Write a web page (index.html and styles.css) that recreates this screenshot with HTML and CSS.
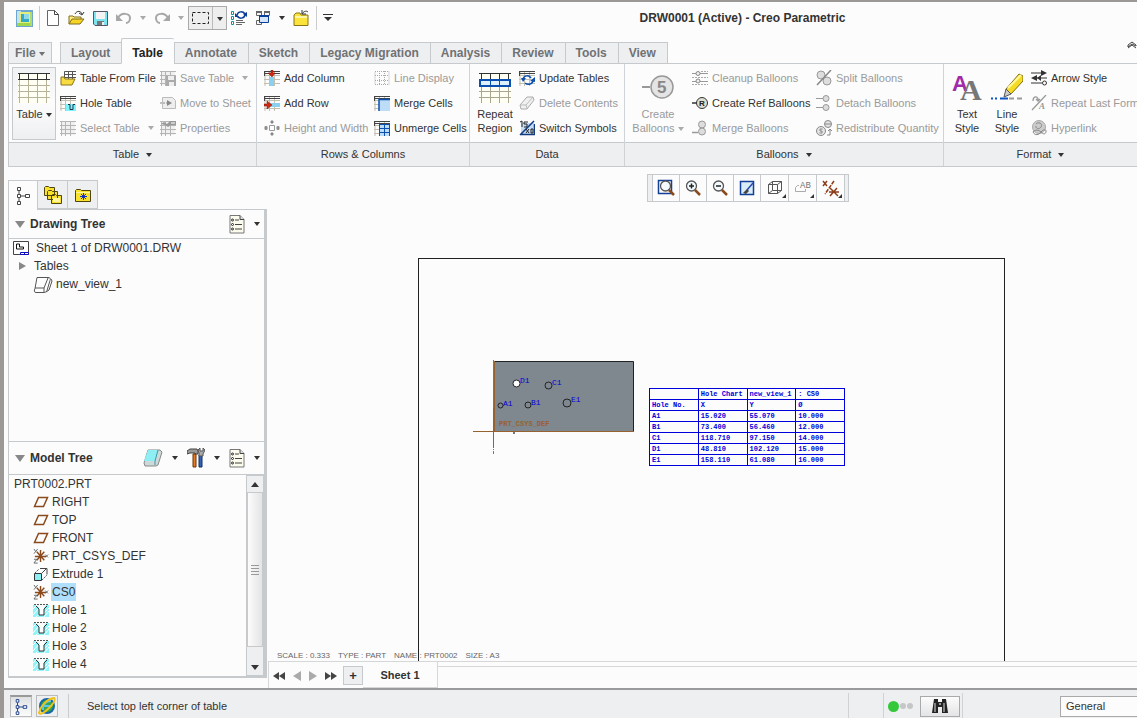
FILE: index.html
```
<!DOCTYPE html>
<html lang="en">
<head>
    <meta charset="utf-8">
    <title>DRW0001 (Active) - Creo Parametric</title>
    <link rel="stylesheet" href="styles.css">
</head>
<body>
<svg class="sprite" width="0" height="0" aria-hidden="true">
    <symbol id="grid" viewBox="0 0 16 16"><path d="M1 1v15M5.500 1v15M10.500 1v15M0 5.500h16M0 9.500h16M0 13.500h16" stroke="#c2bfae" fill="none"/><path d="M0 1.500h16M0 3.500h16M.5 1v5" stroke="#444" fill="none"/></symbol>
    <symbol id="grid-grey" viewBox="0 0 16 16"><path d="M1 1h14v14H1z" fill="#f0f0f0"/><path d="M1.500 1v15M5.500 1v15M10.500 1v15M0 5.500h16M0 9.500h16M0 13.500h16M0 1.500h16" stroke="#b5b5b5" fill="none"/></symbol>
    <symbol id="csys" viewBox="0 0 17 17"><path d="M2 9h12M8 2v13M4 4l8 9M12 4l-8 9" stroke="#8b4a1c" stroke-width="1.500" fill="none"/><path d="M1 1l2 3M5 1L1 6M13 7l3 3M16 7l-3 3M1 12h3l-3 4h4" stroke="#666" fill="none"/></symbol>
    <symbol id="plane" viewBox="0 0 16 16"><path d="M5.500 3.500h9l-4 9h-9z" stroke="#8b4a1c" stroke-width="1.500" fill="none"/></symbol>
    <symbol id="hole" viewBox="0 0 16 14"><path d="M0 2h4l2 3v7h5V5l2-3h3v12H0z" fill="#8ff5fa"/><path d="M0 6l4-4M0 12l5-6M3 14l4-4M11 10l5-5M11 14l5-6" stroke="#fff"/><path d="M1 1.500h14" stroke="#555" stroke-dasharray="2 1"/><path d="M3 3l3 3v6h5V6l3-3" stroke="#333" fill="none"/></symbol>
    <symbol id="list" viewBox="0 0 16 20"><path d="M1 1.500h10l4 4V19H1z" fill="#fbfbee" stroke="#777"/><path d="M11 1.500v4h4" fill="#ddd" stroke="#444"/><path d="M6 6h4M6 10.500h7M6 15h7" stroke="#444"/><g fill="#fff" stroke="#222"><circle cx="3.500" cy="6" r="1"/><circle cx="3.500" cy="10.500" r="1"/><circle cx="3.500" cy="15" r="1"/></g></symbol>
    <symbol id="nodes" viewBox="0 0 16 20"><path d="M4 5v10M4 10h7" stroke="currentColor"/><g fill="#fff" stroke="currentColor"><path d="M2.500 1.500h3v3h-3zM2.500 8.500h3v3h-3zM2.500 15.500h3v3h-3zM10.500 8.500h4v3h-4z"/></g></symbol>
    <symbol id="glass" viewBox="0 0 18 18"><circle cx="7.500" cy="7" r="5" fill="#f4fbff" stroke="#555" stroke-width="1.300"/><path d="M11 11l5 5" stroke="#8b4a1c" stroke-width="2.500"/></symbol>
</svg>

<div class="app">
    <header class="title-bar">
        <div class="quick-access">
            <svg width="17" height="17" viewBox="0 0 17 17"><path d="M0 0h17v17H0z" fill="#6fa6cf"/><path d="M1 1h4v15H1z" fill="#c3e4f2"/><path d="M1 13h15v3H1z" fill="#9fd64b"/><path d="M14 2h2v14h-2z" fill="#b5dd62"/><path d="M4 2h10v11H4z" fill="#e3ee7a"/><path d="M5 4h8v8H5z" fill="#38a7c4"/><path d="M8 4h5v5H8z" fill="#8fd8ea"/></svg>
            <span class="divider"></span>
            <button class="tool" aria-label="New"><svg width="14" height="16" viewBox="0 0 14 16"><path d="M1.500.5h7l4 4v11h-11z" fill="#fff" stroke="#666"/><path d="M8.500.5v4h4" fill="none" stroke="#444"/></svg></button>
            <button class="tool" aria-label="Open"><svg width="17" height="16" viewBox="0 0 17 16"><path d="M1 14V6h4l1 1h7v3" fill="#ffef80" stroke="#806c20"/><path d="M1 14l3-5h12l-4 5z" fill="#f7d426" stroke="#806c20"/><path d="M7 4c2-4 6-3 7 0m-3-1l3 2 2-3" fill="none" stroke="#333"/></svg></button>
            <button class="tool" aria-label="Save"><svg width="15" height="15" viewBox="0 0 15 15"><path d="M.5.5h14v14H2l-1.500-1.500z" fill="#7be6f0" stroke="#556"/><path d="M3 1h9v7H3z" fill="#f4f4f4"/><path d="M4 10h7v4H4z" fill="#777"/><path d="M9 11h2v3H9z" fill="#eee"/></svg></button>
            <button class="tool" aria-label="Undo"><svg width="16" height="14" viewBox="0 0 16 14"><path d="M2 7c3-6 12-5 12 0 0 3-2 5-4 5" fill="none" stroke="#a7a7a7" stroke-width="2"/><path d="M0 3v7h7z" fill="#a7a7a7"/></svg></button>
            <button class="caret faded" aria-label="Undo list"></button>
            <button class="tool" aria-label="Redo"><svg width="16" height="14" viewBox="0 0 16 14"><path d="M14 7C11 1 2 2 2 7c0 3 2 5 4 5" fill="none" stroke="#a7a7a7" stroke-width="2"/><path d="M16 3v7H9z" fill="#a7a7a7"/></svg></button>
            <button class="caret faded" aria-label="Redo list"></button>
            <div class="split">
                <button class="split-main" aria-label="Select box"><svg width="17" height="12" viewBox="0 0 17 12"><path d="M.5.5h16v11H.5z" fill="none" stroke="#222" stroke-dasharray="3 2"/></svg></button>
                <button class="split-drop" aria-label="Selection modes"><span class="caret"></span></button>
            </div>
            <button class="tool" aria-label="Regenerate"><svg width="16" height="16" viewBox="0 0 16 16"><path d="M.5 1.500h2v3h-2zM.5 6.500h2v3h-2zM.5 11.500h2v3h-2z" fill="#fff" stroke="#16919b"/><path d="M5 10.500h7M5 12.500h9M5 14.500h6" stroke="#666"/><path d="M6 5c1-4 6-4 8-1M14 5c-1 4-6 4-8 1" fill="none" stroke="#0b3d9b" stroke-width="1.500"/><path d="M4 3v4h4zM16 7V2l-4 2z" fill="#0b3d9b"/></svg></button>
            <button class="tool" aria-label="Windows"><svg width="16" height="16" viewBox="0 0 16 16"><path d="M1.500 1.500h5v4h-5zM9.500 1.500h5v4h-5zM1.500 10.500h5v4h-5z" fill="#f5f5f5" stroke="#666"/><path d="M1 2h6M9 2h6" stroke="#666" stroke-width="2"/><path d="M4.500 5.500h9v7h-9z" fill="#d5e6f8" stroke="#0b3d9b"/><path d="M4 6h10" stroke="#0b3d9b" stroke-width="2"/></svg></button>
            <button class="caret" aria-label="Window list"></button>
            <button class="tool" aria-label="Close"><svg width="17" height="17" viewBox="0 0 17 17"><path d="M1 15.500V5l2-2h4l1 2h7v10.500z" fill="#fbe33c" stroke="#8a7415"/><path d="M2 7h12" stroke="#fff7a8" stroke-width="2"/><path d="M9 4c1-2 4-4 6-2m-6-2v4h4" stroke="#333" fill="none"/></svg></button>
            <span class="divider"></span>
            <button class="tool" aria-label="Customize toolbar"><svg width="10" height="8" viewBox="0 0 10 8"><path d="M0 .5h10" stroke="#333"/><path d="M1 3h8L5 7z" fill="#333"/></svg></button>
        </div>
        <h1>DRW0001 (Active) - Creo Parametric</h1>
    </header>

    <nav class="tabs">
        <button class="tab file">File <span class="caret"></span></button>
        <button class="tab">Layout</button>
        <button class="tab active">Table</button>
        <button class="tab">Annotate</button>
        <button class="tab">Sketch</button>
        <button class="tab">Legacy Migration</button>
        <button class="tab">Analysis</button>
        <button class="tab">Review</button>
        <button class="tab">Tools</button>
        <button class="tab">View</button>
        <button class="collapse" aria-label="Minimize ribbon"><svg width="10" height="8" viewBox="0 0 10 8"><path d="M1 4l4-3 4 3v1L5 3 1 6zM1 7l4-3 4 3" fill="none" stroke="#444"/></svg></button>
    </nav>

    <section class="ribbon">
        <div class="group group-table">
            <div class="group-body">
                <button class="big pressed">
                    <svg width="32" height="30" viewBox="0 0 32 30" shape-rendering="crispEdges"><path d="M0 0h32v30H0z" fill="#fffff3"/><path d="M1.500 7v23M10.500 7v23M19.500 7v23M28.500 7v23M0 12.500h32M0 18.500h32M0 24.500h32" stroke="#b8b49c"/><path d="M0 .5h32M0 6.500h32M1.500 0v7M10.500 0v7M19.500 0v7M28.500 0v7" stroke="#333"/></svg>
                    <span>Table <i class="caret"></i></span>
                </button>
                <div class="commands">
                    <button><svg width="16" height="16" viewBox="0 0 16 16"><path d="M4.500 9V1.500H16M4 4.500h12M4 7.500h12M8.500 1v8M12.500 1v8" fill="none" stroke="#555"/><path d="M1 14V7h3l1 2h10l-3 6H1z" fill="#f6dc42" stroke="#8c7318"/></svg>Table From File</button>
                    <button disabled><svg width="16" height="16"><use href="#grid-grey"/><path d="M6 6h10v10H6z" fill="#aaa"/><path d="M8 6h6v4H8zM9 12h5v4H9z" fill="#eee"/></svg>Save Table <i class="caret faded"></i></button>
                    <button><svg width="16" height="16"><use href="#grid"/><path d="M6 9h10v7H6z" fill="#7df3fb"/><path d="M8 9.500h2v5h3v-5h2" fill="none" stroke="#234"/></svg>Hole Table</button>
                    <button disabled><svg width="16" height="14" viewBox="0 0 16 14"><path d="M2.500 1.500h10l3 3v8h-13z" fill="#eee" stroke="#bbb"/><path d="M0 7h7" stroke="#888" stroke-dasharray="2 1"/><path d="M7 4l5 3-5 3z" fill="#888"/></svg>Move to Sheet</button>
                    <button disabled><svg width="16" height="16"><use href="#grid-grey"/></svg>Select Table <i class="caret faded"></i></button>
                    <button disabled><svg width="16" height="16"><use href="#grid-grey"/><path d="M1 4l3-2 3 2 3-3h6v4h-5l-3 2-3-2z" fill="#999"/><path d="M11 2h4v2h-4z" fill="#ccc"/></svg>Properties</button>
                </div>
            </div>
            <h2>Table <i class="caret"></i></h2>
        </div>

        <div class="group group-rows">
            <div class="group-body">
                <div class="commands">
                    <button><svg width="16" height="16"><use href="#grid"/><path d="M5 7h5v9H5z" fill="#8bd0ee"/><path d="M7 0h2v3h2L8 7 4 3h3z" fill="#d3290f" stroke="#7a1407" stroke-width=".5"/></svg>Add Column</button>
                    <button disabled><svg width="16" height="16" viewBox="0 0 16 16"><path d="M1 1.500h14v13H1zM1 5.500h14M1 10.500h14M5.500 1v14M10.500 1v14" fill="none" stroke="#aaa" stroke-dasharray="1 1"/></svg>Line Display</button>
                    <button><svg width="16" height="16"><use href="#grid"/><path d="M5 8h11v4H5z" fill="#8bd0ee"/><path d="M0 9h3V6l5 4-5 4v-3H0z" fill="#d3290f" stroke="#7a1407" stroke-width=".5"/></svg>Add Row</button>
                    <button><svg width="16" height="16"><use href="#grid"/><path d="M5 5h11v11H5z" fill="#bddcf7"/><path d="M5 16V4.500h11" fill="none" stroke="#0b4fb0" stroke-width="1.500"/></svg>Merge Cells</button>
                    <button disabled><svg width="16" height="16" viewBox="0 0 16 16"><path d="M5.500 5.500h5v5h-5z" fill="#fff" stroke="#999"/><path d="M0 8h4M2 6v4M1 6l2 4M3 6l-2 4M12 8h4M14 6v4M13 6l2 4M15 6l-2 4M8 0v4M6 2h4M7 1l2 2M9 1L7 3M8 12v4M6 14h4M7 13l2 2M9 13l-2 2" stroke="#888"/></svg>Height and Width</button>
                    <button><svg width="16" height="16"><use href="#grid"/><path d="M5 4h11v12H5z" fill="#bddcf7"/><path d="M5.500 4v12M10.500 4v12M15.500 4v12M5 4.500h11M5 8.500h11M5 12.500h11" stroke="#0b4fb0"/></svg>Unmerge Cells</button>
                </div>
            </div>
            <h2>Rows &amp; Columns</h2>
        </div>

        <div class="group group-data">
            <div class="group-body">
                <button class="big">
                    <svg width="32" height="30" viewBox="0 0 32 30" shape-rendering="crispEdges"><path d="M0 0h32v30H0z" fill="#fffff3"/><path d="M2.500 13v17M11.500 13v17M20.500 13v17M29.500 13v17M0 18.500h32M0 24.500h32" stroke="#aaa691"/><path d="M0 .5h32M2.500 0v7M11.500 0v7M20.500 0v7M29.500 0v7" stroke="#333"/><path d="M1 7h30v6H1z" fill="#dff1fc" stroke="#0b4fb0" stroke-width="2"/><path d="M11.500 7v6M20.500 7v6" stroke="#0b4fb0"/></svg>
                    <span>Repeat<br>Region</span>
                </button>
                <div class="commands single">
                    <button><svg width="16" height="16"><use href="#grid"/><path d="M4 9c1-4 6-4 8-1M14 11c-1 4-6 4-8 2" fill="none" stroke="#0b4fb0" stroke-width="1.500"/><path d="M2 8h5l-3 4zM11 11l5-4v5z" fill="#0b4fb0"/></svg>Update Tables</button>
                    <button disabled><svg width="16" height="14" viewBox="0 0 16 14"><path d="M1 9l7-8h6l1 3-7 9H2z" fill="#f1f1f1" stroke="#aaa"/><path d="M2 9h5l7-8M7 9l1 3" fill="none" stroke="#bbb"/></svg>Delete Contents</button>
                    <button><svg width="16" height="16" viewBox="0 0 16 16"><path d="M2 3h13v11H2z" fill="#c4dcf5"/><path d="M1 15L15 1M1 14.500h14.500V4" stroke="#123b80" fill="none" stroke-width="1.500"/><path d="M1 2l2-1v6M9 2H5v2h3v3H5M7 9l3 4M10 9l-3 4M12 9h2v4h-2z" fill="none" stroke="#222"/></svg>Switch Symbols</button>
                </div>
            </div>
            <h2>Data</h2>
        </div>

        <div class="group group-balloons">
            <div class="group-body">
                <button class="big" disabled>
                    <svg width="32" height="30" viewBox="0 0 32 30"><path d="M0 14h8" stroke="#999" stroke-width="2"/><circle cx="20" cy="14" r="11" fill="#e4e4e4" stroke="#999" stroke-width="1.500"/><text x="15" y="20" class="balloon-number">5</text></svg>
                    <span>Create<br>Balloons <i class="caret faded"></i></span>
                </button>
                <div class="commands">
                    <button disabled><svg width="16" height="16" viewBox="0 0 16 16"><path d="M0 3.500h4M8 3.500h8M0 11.500h4M8 11.500h8" stroke="#999"/><path d="M0 7.500h16M0 14.500h16M9 1.500h7" stroke="#aaa" stroke-dasharray="2 1"/><circle cx="6" cy="3.500" r="2" fill="#eee" stroke="#888"/><circle cx="6" cy="11" r="2" fill="#eee" stroke="#888"/></svg>Cleanup Balloons</button>
                    <button disabled><svg width="16" height="16" viewBox="0 0 16 16"><g fill="#ddd" stroke="#999"><circle cx="5" cy="5" r="4"/><circle cx="11" cy="11" r="4"/></g><path d="M15 0L1 15" stroke="#888" stroke-width="1.500"/></svg>Split Balloons</button>
                    <button><svg width="16" height="14" viewBox="0 0 16 14"><path d="M0 7h5" stroke="#333" stroke-width="1.500"/><circle cx="10" cy="7" r="5.500" fill="#deded0" stroke="#333"/><text x="7" y="10" class="ref-letter">R</text></svg>Create Ref Balloons</button>
                    <button disabled><svg width="16" height="16" viewBox="0 0 16 16"><path d="M0 3.500h7M0 12.500h7" stroke="#999"/><g fill="#ddd" stroke="#999"><circle cx="10" cy="3.500" r="3"/><circle cx="10" cy="12.500" r="3"/></g></svg>Detach Balloons</button>
                    <button disabled><svg width="16" height="16" viewBox="0 0 16 16"><path d="M0 12.500h6" stroke="#999" stroke-width="1.500"/><g fill="#ddd" stroke="#999"><circle cx="10" cy="4.500" r="3.500"/><circle cx="10" cy="11.500" r="3.500"/></g></svg>Merge Balloons</button>
                    <button disabled><svg width="16" height="16" viewBox="0 0 16 16"><g fill="#e4e4e4" stroke="#888"><circle cx="5" cy="11" r="4.500"/><circle cx="12" cy="4" r="3.500"/></g><path d="M9 4h6M6.500 9H4v2h2v2H3.500M11 15h3V9m-2 2l2-2 2 2" fill="none" stroke="#888"/></svg>Redistribute Quantity</button>
                </div>
            </div>
            <h2>Balloons <i class="caret"></i></h2>
        </div>

        <div class="group group-format">
            <div class="group-body">
                <button class="big narrow">
                    <svg width="32" height="30" viewBox="0 0 32 30"><text x="1" y="18" class="letter-back">A</text><text x="9" y="27" class="letter-front">A</text></svg>
                    <span>Text<br>Style</span>
                </button>
                <button class="big narrow">
                    <svg width="32" height="30" viewBox="0 0 32 30"><path d="M0 25.500h2M4 25.500h2" stroke="#0b55c4" stroke-width="2"/><path d="M9 25.500h8" stroke="#0b55c4" stroke-width="2"/><path d="M18 25.500h5M26 25.500h5" stroke="#999" stroke-width="2"/><path d="M28 1l4 2v5L20 21l-5-5z" fill="#f5dc24" stroke="#806d13"/><path d="M17 15L30 2" stroke="#fff799" stroke-width="2"/><path d="M15 16l5 5-7 3z" fill="#ccc" stroke="#555"/></svg>
                    <span>Line<br>Style</span>
                </button>
                <div class="commands single">
                    <button><svg width="16" height="16" viewBox="0 0 16 16"><path d="M0 3h13M4 8h12M0 13h11" stroke="#333"/><path d="M10 0l6 3-6 3zM6 5L0 8l6 3zM10 5L6 8l4 3z" fill="#333"/><circle cx="13.500" cy="13" r="2" fill="#fff" stroke="#333"/></svg>Arrow Style</button>
                    <button disabled><svg width="16" height="16" viewBox="0 0 16 16"><path d="M15 0L1 15M2 6c0-6 6-5 5 0m-2-2l2 2 2-2" fill="none" stroke="#999" stroke-width="1.300"/><text x="8" y="14" class="small-letter">A</text></svg>Repeat Last Format</button>
                    <button disabled><svg width="16" height="16" viewBox="0 0 16 16"><circle cx="8" cy="7" r="6.500" fill="#ccc" stroke="#aaa"/><g fill="none" stroke="#888"><path d="M5 4c3-3 7 0 5 3s-6 1-5-1M2 12c2-3 6-2 8 0s4 3 5 0-3-3-5 0-6 4-8 0z"/></g></svg>Hyperlink</button>
                </div>
            </div>
            <h2>Format <i class="caret"></i></h2>
        </div>
    </section>

    <main class="workspace">
        <aside class="navigator">
            <div class="nav-tabs">
                <button class="nav-tab active" aria-label="Model tree"><svg width="16" height="20"><use href="#nodes"/></svg></button>
                <button class="nav-tab" aria-label="Folder browser"><svg width="20" height="20" viewBox="0 0 20 20"><g fill="#f9e22d" stroke="#4f4510"><path d="M1.500 10.500v-8l1-1h3l1 1h5v8zM4.500 14.500v-8l1-1h3l1 1h5v8zM8.500 18.500v-8l1-1h3l1 1h5v8z"/></g><path d="M10 13h7v4h-7z" fill="#fff59a"/></svg></button>
                <button class="nav-tab" aria-label="Favorites"><svg width="18" height="16" viewBox="0 0 18 16"><path d="M1.500 14.500v-11l1-1h4l1 1h9v11z" fill="#f9e22d" stroke="#4f4510"/><path d="M2 5.500h14" stroke="#fff59a"/><path d="M6 9.500h7M9.500 6v7M7 7l5 5M12 7l-5 5" stroke="#1531b8"/></svg></button>
            </div>
            <div class="trees">
                <section class="tree drawing-tree">
                    <header>
                        <i class="twisty open"></i>
                        <h3>Drawing Tree</h3>
                        <button class="tool" aria-label="Tree settings"><svg width="16" height="20"><use href="#list"/></svg></button>
                        <button class="caret" aria-label="Tree settings menu"></button>
                    </header>
                    <ul>
                        <li class="sheet"><svg width="16" height="14" viewBox="0 0 16 14"><path d="M.5.5h15v13H.5z" fill="#fff" stroke="#444"/><path d="M3.500 3v5h7V6h-4V3z" fill="none" stroke="#111"/><path d="M7.500 13.500v-2h8v2zM11.500 11v3" fill="#fff" stroke="#0b0bc4"/></svg><span>Sheet 1 of DRW0001.DRW</span></li>
                        <li class="branch"><i class="twisty"></i><span>Tables</span></li>
                        <li class="leaf"><svg width="20" height="17" viewBox="0 0 20 17"><path d="M4 1.500h11c2 0 3 1 2 3l-3 10c0 1-2 2-3 2H3c-2 0-2-2-1-4zM2 12h9l4-10M11 12v4M18 3l1 2-3 9-3 2" fill="#fff" stroke="#555"/></svg><span>new_view_1</span></li>
                    </ul>
                </section>
                <section class="tree model-tree">
                    <header>
                        <i class="twisty open"></i>
                        <h3>Model Tree</h3>
                        <button class="tool" aria-label="Show"><svg width="20" height="18" viewBox="0 0 20 18"><path d="M5 1h12l2 2-4 13-2 1H2l-1-3z" fill="#cfd8d8" stroke="#888"/><path d="M5 1h10l-3 11H1z" fill="#8deef4"/><path d="M15 1l-3 11v4" fill="none" stroke="#3b9aa5"/></svg></button>
                        <button class="caret" aria-label="Show menu"></button>
                        <button class="tool" aria-label="Settings"><svg width="18" height="20" viewBox="0 0 18 20"><path d="M0 6V3l3-2h7l1 2v3H8V5H3z" fill="#999" stroke="#444"/><path d="M6 6h3v13H6z" fill="#e27c26" stroke="#6b3206"/><path d="M12 7h3v12h-3z" fill="#3264b5" stroke="#162d60"/><path d="M12 8V5l-1-3 2-2v3h3V0l2 2-2 4v2z" fill="#aaa" stroke="#555"/></svg></button>
                        <button class="caret" aria-label="Settings menu"></button>
                        <button class="tool" aria-label="Columns"><svg width="16" height="20"><use href="#list"/></svg></button>
                        <button class="caret" aria-label="Columns menu"></button>
                    </header>
                    <div class="scroll-area">
                        <ul>
                            <li class="root"><span>PRT0002.PRT</span></li>
                            <li class="feature"><svg width="16" height="16"><use href="#plane"/></svg><span>RIGHT</span></li>
                            <li class="feature"><svg width="16" height="16"><use href="#plane"/></svg><span>TOP</span></li>
                            <li class="feature"><svg width="16" height="16"><use href="#plane"/></svg><span>FRONT</span></li>
                            <li class="feature"><svg width="16" height="16"><use href="#csys"/></svg><span>PRT_CSYS_DEF</span></li>
                            <li class="feature"><svg width="16" height="16" viewBox="0 0 16 16"><path d="M1.500 7.500h7v7h-7z" fill="#8deef4" stroke="#333"/><path d="M2 7l4-4M9 7l5-5M9 14l5-5" stroke="#555" stroke-dasharray="2 1"/><path d="M7 2.500h7v6M10 6l4-4" fill="none" stroke="#444"/></svg><span>Extrude 1</span></li>
                            <li class="feature selected"><svg width="16" height="16"><use href="#csys"/></svg><span>CS0</span></li>
                            <li class="feature"><svg width="16" height="14"><use href="#hole"/></svg><span>Hole 1</span></li>
                            <li class="feature"><svg width="16" height="14"><use href="#hole"/></svg><span>Hole 2</span></li>
                            <li class="feature"><svg width="16" height="14"><use href="#hole"/></svg><span>Hole 3</span></li>
                            <li class="feature"><svg width="16" height="14"><use href="#hole"/></svg><span>Hole 4</span></li>
                        </ul>
                        <div class="scrollbar">
                            <button aria-label="Scroll up"><i class="caret up"></i></button>
                            <div class="thumb"><i></i><i></i><i></i><i></i></div>
                            <button aria-label="Scroll down"><i class="caret"></i></button>
                        </div>
                    </div>
                </section>
            </div>
        </aside>

        <section class="graphics">
            <div class="canvas">
                <div class="view-toolbar">
                    <button aria-label="Refit"><svg width="18" height="18"><path d="M1.500 1.500h13v13h-13z" fill="none" stroke="#123f98" stroke-width="1.500"/><use href="#glass" x="1"/></svg></button>
                    <button aria-label="Zoom in"><svg width="18" height="18"><use href="#glass"/><path d="M5 7h5M7.500 4.500v5" stroke="#222" stroke-width="1.500"/></svg></button>
                    <button aria-label="Zoom out"><svg width="18" height="18"><use href="#glass"/><path d="M5 7h5" stroke="#222" stroke-width="1.500"/></svg></button>
                    <button aria-label="Repaint"><svg width="16" height="16" viewBox="0 0 16 16"><path d="M1.500 1.500h13v13h-13z" fill="#d9ecf8" stroke="#123f98" stroke-width="1.500"/><path d="M14 3l-6 7" stroke="#2149b0" stroke-width="1.500"/><path d="M4 13l4-4 2 2-3 3z" fill="#444"/></svg></button>
                    <button class="menu" aria-label="Display style"><svg width="16" height="16" viewBox="0 0 16 16"><path d="M1.500 4.500h9v9h-9zM5.500 1.500h9v9h-9zM1.500 4.500l4-3M10.500 4.500l4-3M10.500 13.500l4-3M1.500 13.500l4-3" fill="none" stroke="#555"/></svg></button>
                    <button class="menu" aria-label="Annotation display"><svg width="18" height="16" viewBox="0 0 18 16"><path d="M5 5.500H3.500l-2 2v4h10V9" fill="none" stroke="#aaa"/><text x="6" y="8" class="ab">AB</text></svg></button>
                    <button class="menu" aria-label="Datum display"><svg width="18" height="17" viewBox="0 0 18 17"><path d="M1 1l4 5M5 1L1 6M8 8l8 8M15 8l-7 8M7 12h10" fill="none" stroke="#8b3d18" stroke-width="1.500"/><path d="M12 1L3 14" fill="none" stroke="#8b3d18" stroke-width="1.500" stroke-dasharray="4 1"/></svg></button>
                </div>
                <div class="sheet-frame"></div>
                <svg class="part-view" width="164" height="98" viewBox="0 0 164 98">
                    <path d="M20.500 3.500h140v70h-140z" fill="#80888f" stroke="#222"/>
                    <g fill="none" shape-rendering="crispEdges">
                        <path d="M20.500 2v94" stroke="#777" stroke-dasharray="88 1 1 1"/>
                        <path d="M21.500 3v70M20.500 50v40M0 73.500h161" stroke="#96622f"/>
                    </g>
                    <path d="M40 75h2" stroke="#777" stroke-width="2"/>
                    <circle cx="43.500" cy="25.500" r="3.500" fill="#fff" stroke="#222"/>
                    <g fill="none" stroke="#222"><circle cx="75.500" cy="27.500" r="3.500"/><circle cx="27.500" cy="47.500" r="2.500"/><circle cx="55" cy="47" r="3"/><circle cx="94" cy="45" r="4"/></g>
                    <g class="hole-label"><text x="47" y="25">D1</text><text x="79" y="27">C1</text><text x="30" y="48">A1</text><text x="58" y="47">B1</text><text x="98" y="44">E1</text></g>
                    <text x="26" y="68" class="csys-label">PRT_CSYS_DEF</text>
                </svg>
                <table class="hole-table">
                    <tr><td></td><td>Hole Chart</td><td>new_view_1</td><td>: CS0</td></tr>
                    <tr><td>Hole No.</td><td>X</td><td>Y</td><td>Ø</td></tr>
                    <tr><td>A1</td><td>15.020</td><td>55.070</td><td>10.000</td></tr>
                    <tr><td>B1</td><td>73.400</td><td>56.460</td><td>12.000</td></tr>
                    <tr><td>C1</td><td>118.710</td><td>97.150</td><td>14.000</td></tr>
                    <tr><td>D1</td><td>48.810</td><td>102.120</td><td>15.000</td></tr>
                    <tr><td>E1</td><td>158.110</td><td>61.080</td><td>16.000</td></tr>
                </table>
                <p class="sheet-info"><span>SCALE : 0.333</span><span>TYPE : PART</span><span>NAME : PRT0002</span><span>SIZE : A3</span></p>
            </div>
            <div class="sheet-bar">
                <button class="pager" aria-label="First sheet"><svg width="12" height="8"><path d="M6 0v8L0 4zM12 0v8L6 4z" fill="#444"/></svg></button>
                <button class="pager" aria-label="Previous sheet"><svg width="8" height="10"><path d="M8 0v10L0 5z" fill="#aaa"/></svg></button>
                <button class="pager" aria-label="Next sheet"><svg width="8" height="10"><path d="M0 0v10l8-5z" fill="#aaa"/></svg></button>
                <button class="pager" aria-label="Last sheet"><svg width="12" height="8"><path d="M0 0v8l6-4zM6 0v8l6-4z" fill="#444"/></svg></button>
                <button class="add-sheet" aria-label="Add sheet">+</button>
                <button class="sheet-tab">Sheet 1</button>
                <span class="rest"></span>
            </div>
        </section>
    </main>

    <footer class="status-bar">
        <button class="status-button on" aria-label="Toggle navigator"><svg width="14" height="18"><use href="#nodes"/></svg></button>
        <button class="status-button" aria-label="Toggle browser"><svg width="18" height="18" viewBox="0 0 18 18"><circle cx="9" cy="9" r="7" fill="#35a44c" stroke="#1667a8" stroke-width="2"/><path d="M5 13c0-7 3-9 8-9M5 9h9" fill="none" stroke="#55c7f3" stroke-width="2"/><path d="M1 16C3 8 9 2 16 1c2 2-1 6-5 10S3 18 1 16z" fill="none" stroke="#efc21a" stroke-width="2"/></svg></button>
        <span class="divider"></span>
        <p>Select top left corner of table</p>
        <div class="status-right">
            <span class="slot"></span>
            <span class="lights"><i class="green"></i><i></i><i></i></span>
            <button class="find" aria-label="Find"><svg width="18" height="16" viewBox="0 0 18 16"><path d="M3 1h4v3h4V1h4l2 14h-6V9H7v6H1z" fill="#222"/><path d="M4 5v9M13 5v9" stroke="#ddd"/><path d="M8 5h2v2H8z" fill="#999"/></svg></button>
            <label class="filter"><select aria-label="Selection filter"><option>General</option></select></label>
        </div>
    </footer>
</div>
</body>
</html>
```
FILE: styles.css
```
* {
    box-sizing: border-box;
}

body {
    margin: 0;
    font-family: "Liberation Sans", Arial, sans-serif;
    font-size: 11px;
    color: #333;
    background: #fcfcfc;
    overflow: hidden;
}

h1, h2, h3, p, ul {
    margin: 0;
    padding: 0;
}

ul {
    list-style: none;
}

button {
    font: inherit;
    color: inherit;
    background: none;
    border: none;
    margin: 0;
    padding: 0;
    white-space: nowrap;
    cursor: pointer;
}

button:disabled {
    color: #9a9a9a;
}

svg {
    display: block;
    flex: none;
}

.sprite {
    position: absolute;
}

.app {
    display: flex;
    flex-direction: column;
    height: 100vh;
    border-left: 4px solid #9b9896;
    border-top: 2px solid #9b9896;
}

.caret {
    display: inline-block;
    flex: none;
    width: 0;
    height: 0;
    border: 3px solid transparent;
    border-top: 4px solid #333;
    border-bottom: none;
    vertical-align: middle;
}

.caret.faded {
    border-top-color: #aaa;
}

.caret.up {
    border-top: none;
    border-bottom: 4px solid #333;
}

.divider {
    width: 1px;
    height: 24px;
    background: #ccc;
}

/* title bar */
.title-bar {
    display: flex;
    align-items: center;
    height: 36px;
    padding-bottom: 4px;
}

.quick-access {
    display: flex;
    align-items: center;
    gap: 8px;
    width: 330px;
    padding-left: 12px;
}

.quick-access .divider {
    margin: 0 -2px;
}

.split {
    display: flex;
    height: 24px;
    margin: 0 -4px;
    border: 1px solid #aaa;
    background: #eee;
}

.split-main {
    padding: 0 3px;
}

.split-drop {
    width: 14px;
    border-left: 1px solid #bbb;
}

.title-bar h1 {
    flex: 1;
    padding-left: 14px;
    text-align: center;
    font-size: 12px;
    line-height: 16px;
}

/* ribbon tabs */
.tabs {
    display: flex;
    align-items: flex-end;
    height: 26px;
    padding-left: 4px;
    font-size: 12px;
    font-weight: bold;
    color: #707274;
    position: relative;
    z-index: 1;
}

.tab {
    height: 22px;
    padding: 0 11px 0 10px;
    border: 1px solid #c6cacd;
    border-right: none;
    background: #eeeff1;
}

.tab.file {
    margin-right: 8px;
    padding: 0 6px;
    border-right: 1px solid #c6cacd;
}

.tab.file .caret {
    border-top-color: #707274;
}

.tab.active {
    height: 26px;
    padding-top: 3px;
    color: #222;
    background: #fcfcfc;
    border-bottom-color: #fcfcfc;
    border-radius: 2px 2px 0 0;
}

.tab:nth-last-child(2) {
    border-right: 1px solid #c6cacd;
}

.collapse {
    align-self: flex-start;
    margin: 3px 0 0 auto;
}

/* ribbon */
.ribbon {
    display: flex;
    height: 104px;
    margin: -1px 0 0 4px;
    border: 1px solid #c6cacd;
    border-right: none;
    flex: none;
    overflow: hidden;
}

.group {
    display: flex;
    flex-direction: column;
    flex: none;
    border-right: 1px solid #d0d3d6;
}

.group-table {
    width: 248px;
}

.group-rows {
    width: 213px;
}

.group-data {
    width: 155px;
}

.group-balloons {
    width: 319px;
}

.group-format {
    flex: 1;
    min-width: 0;
    border-right: none;
}

.group-body {
    display: flex;
    flex: 1;
    padding: 3px 3px 0;
}

.group h2 {
    height: 24px;
    border-top: 1px solid #c6cacd;
    background: #eeeff1;
    text-align: center;
    font-size: 11px;
    font-weight: normal;
    line-height: 23px;
}

.group h2 .caret {
    margin-left: 4px;
}

.big {
    display: flex;
    flex-direction: column;
    align-items: center;
    gap: 4px;
    flex: none;
    width: 44px;
    height: 73px;
    padding-top: 6px;
    line-height: 14px;
    text-align: center;
}

.big.pressed {
    padding-top: 5px;
    border: 1px solid #c6cacd;
    background: linear-gradient(#f1f2f4, #fcfcfc 50%, #eeeff1);
}

.big.narrow {
    width: 40px;
}

.group-balloons .big {
    width: 60px;
}

.commands {
    display: grid;
    grid-template-columns: 100px auto;
    grid-auto-rows: 25px;
    justify-content: start;
    padding-left: 4px;
}

.commands.single {
    grid-template-columns: auto;
}

.group-rows .commands {
    grid-template-columns: 110px auto;
}

.group-data .commands {
    padding-left: 2px;
}

.group-balloons .commands {
    grid-template-columns: 124px auto;
}

.commands button {
    display: flex;
    align-items: center;
    gap: 4px;
    height: 22px;
}

.commands .caret {
    margin-left: 4px;
}

.balloon-number {
    font: bold 17px "Liberation Sans", Arial, sans-serif;
    fill: #888;
}

.ref-letter {
    font: bold 8px "Liberation Sans", Arial, sans-serif;
    fill: #222;
}

.letter-back {
    font: bold 22px "Liberation Sans", Arial, sans-serif;
    fill: #a02aa8;
}

.letter-front {
    font: bold 30px "Liberation Serif", "Times New Roman", serif;
    fill: #777;
}

.small-letter {
    font: italic bold 9px "Liberation Serif", "Times New Roman", serif;
    fill: #999;
}

/* navigator */
.workspace {
    display: flex;
    flex: 1;
    min-height: 0;
}

.navigator {
    display: flex;
    flex-direction: column;
    width: 263px;
    padding: 13px 0 10px 4px;
}

.nav-tabs {
    display: flex;
    height: 30px;
    position: relative;
    z-index: 1;
}

.nav-tab {
    display: flex;
    align-items: center;
    justify-content: center;
    width: 30px;
    height: 29px;
    border: 1px solid #c6cacd;
    border-left: none;
    background: #eeeff1;
}

.nav-tab.active {
    height: 30px;
    border-left: 1px solid #c6cacd;
    border-bottom: none;
    background: #fcfcfc;
    color: #444;
}

.trees {
    display: flex;
    flex-direction: column;
    flex: 1;
    min-height: 0;
    margin-top: -1px;
    border: 1px solid #c6cacd;
    border-right-width: 3px;
    border-bottom-width: 2px;
}

.tree {
    display: flex;
    flex-direction: column;
    min-height: 0;
    font-size: 12px;
}

.tree header {
    display: flex;
    align-items: center;
    gap: 9px;
    height: 29px;
    padding: 0 4px 0 6px;
    border-bottom: 1px solid #c6cacd;
    flex: none;
}

.tree h3 {
    flex: 1;
    margin-left: -4px;
    font-size: 12px;
}

.drawing-tree {
    flex: 1;
}

.model-tree {
    border-top: 1px solid #c6cacd;
}

.model-tree header {
    height: 33px;
}

.twisty {
    width: 0;
    height: 0;
    border: 4px solid transparent;
    border-left: 7px solid #888;
    border-right: none;
}

.twisty.open {
    border: 5px solid transparent;
    border-top: 7px solid #888;
    border-bottom: none;
}

.tree li {
    display: flex;
    align-items: center;
    height: 18px;
    line-height: 18px;
}

.tree .sheet {
    gap: 7px;
    padding-left: 4px;
}

.tree .branch {
    gap: 8px;
    padding-left: 10px;
}

.tree .leaf {
    gap: 3px;
    padding-left: 24px;
}

.tree .root {
    padding-left: 5px;
}

.tree .feature {
    gap: 2px;
    padding-left: 24px;
}

.feature span {
    padding: 0 1px;
}

.selected span {
    background: #b0dffc;
}

.scroll-area {
    display: flex;
    justify-content: space-between;
}

.scroll-area ul {
    padding-bottom: 3px;
}

.scrollbar {
    display: flex;
    flex-direction: column;
    width: 18px;
    border: 1px solid #c6cacd;
    background: #eeeff1;
}

.scrollbar button {
    height: 16px;
    line-height: 10px;
}

.scrollbar .caret {
    border-width: 4px;
    border-top-width: 5px;
}

.scrollbar .caret.up {
    border-top-width: 0;
    border-bottom-width: 5px;
}

.scrollbar .caret:not(.up) {
    border-bottom-width: 0;
}

.thumb {
    display: flex;
    flex-direction: column;
    align-items: center;
    justify-content: center;
    gap: 2px;
    flex: 1;
    margin-bottom: 12px;
    border: 1px solid #c6cacd;
    background: linear-gradient(90deg, #fcfcfc, #e3e4e6);
}

.thumb i {
    width: 8px;
    height: 1px;
    background: #999;
}

/* graphics area */
.graphics {
    display: flex;
    flex-direction: column;
    flex: 1;
    min-width: 0;
}

.canvas {
    position: relative;
    flex: 1;
    min-height: 0;
    overflow: hidden;
}

.view-toolbar {
    display: flex;
    width: max-content;
    height: 28px;
    margin: 7px 0 0 380px;
    padding: 0 4px;
    border: 1px solid #c6cacd;
    background: #eeeff1;
}

.view-toolbar button {
    display: flex;
    align-items: center;
    justify-content: center;
    width: 28px;
    margin-right: -1px;
    border: 1px solid #c6cacd;
    border-width: 0 1px;
    background: #fcfcfc;
}

.view-toolbar .menu {
    position: relative;
    width: 29px;
}

.view-toolbar .menu::after {
    content: "";
    position: absolute;
    right: 2px;
    bottom: 3px;
    border: 2px solid #333;
    border-top-color: transparent;
    border-left-color: transparent;
}

.ab {
    font: 9px "Liberation Mono", monospace;
    fill: #777;
}

/* drawing items sit freely on the sheet */
.sheet-frame {
    position: absolute;
    left: 151px;
    top: 91px;
    bottom: 0;
    width: 587px;
    border: 1px solid #222;
    border-bottom: none;
}

.part-view {
    position: absolute;
    left: 206px;
    top: 191px;
}

.hole-label {
    font: 8px "Liberation Mono", monospace;
    fill: #0000dc;
}

.csys-label {
    font: bold 7px "Liberation Mono", monospace;
    fill: #96622f;
}

.hole-table {
    position: absolute;
    left: 382px;
    top: 221px;
    width: 196px;
    table-layout: fixed;
    border-collapse: collapse;
    font: bold 7px "Liberation Mono", monospace;
    color: #0000dc;
}

.hole-table td {
    height: 11px;
    padding: 0 2px;
    border: 1px solid #0000dc;
    line-height: 10px;
    white-space: nowrap;
}

.sheet-info {
    position: absolute;
    left: 10px;
    bottom: 0;
    display: flex;
    gap: 8px;
    font-size: 8px;
    line-height: 10px;
    color: #666;
}

.sheet-bar {
    display: flex;
    align-items: flex-start;
    height: 27px;
    margin-left: 1px;
    border: 1px solid #d5d7d9;
    border-width: 1px 0 0 1px;
}

.pager {
    display: flex;
    align-items: center;
    height: 28px;
    margin-left: 4px;
    margin-right: 4px;
}

.add-sheet {
    width: 20px;
    height: 19px;
    margin: 4px 0 0 2px;
    border: 1px solid #c6cacd;
    background: #eeeff1;
    font-size: 13px;
    font-weight: bold;
    line-height: 14px;
}

.sheet-tab {
    width: 75px;
    height: 26px;
    border: 1px solid #d5d7d9;
    border-width: 0 1px 1px 0;
    font-weight: bold;
}

.rest {
    flex: 1;
    height: 5px;
    border-bottom: 1px solid #d5d7d9;
}

/* status bar */
.status-bar {
    display: flex;
    align-items: center;
    flex: none;
    height: 30px;
    padding: 4px 0 0 6px;
    gap: 4px;
    border-top: 2px solid #999b9d;
    background: #eeeff1;
}

.status-button {
    display: flex;
    align-items: center;
    justify-content: center;
    width: 22px;
    height: 22px;
    border: 1px solid #bbb;
    color: #0b2f80;
}

.status-button.on {
    border-top: 2px solid #999;
    background: linear-gradient(#dfe0e2, #fcfcfc);
}

.status-bar .divider {
    margin: 0 14px 0 6px;
}

.status-right {
    display: flex;
    align-items: center;
    margin-left: auto;
    height: 26px;
}

.slot {
    width: 35px;
    height: 26px;
    border-left: 1px solid #d0d3d6;
}

.lights {
    display: flex;
    align-items: center;
    gap: 1px;
    height: 26px;
    padding: 0 7px 0 4px;
    border-left: 1px solid #d0d3d6;
}

.lights i {
    width: 6px;
    height: 6px;
    border-radius: 50%;
    background: #c4c6c8;
}

.lights .green {
    width: 11px;
    height: 11px;
    background: #35c83a;
}

.find {
    display: flex;
    align-items: center;
    justify-content: center;
    width: 40px;
    height: 21px;
    border: 1px solid #aaa;
    background: linear-gradient(#fcfcfc, #e3e4e6);
}

.filter {
    display: flex;
    align-items: center;
    height: 26px;
    margin-left: 2px;
    padding-left: 97px;
    border-left: 1px solid #d0d3d6;
}

.filter select {
    width: 77px;
    height: 21px;
    padding: 0 5px;
    border: 1px solid #aaa;
    border-right: none;
    background: #fcfcfc;
    color: #333;
    font: inherit;
    appearance: none;
}
```
